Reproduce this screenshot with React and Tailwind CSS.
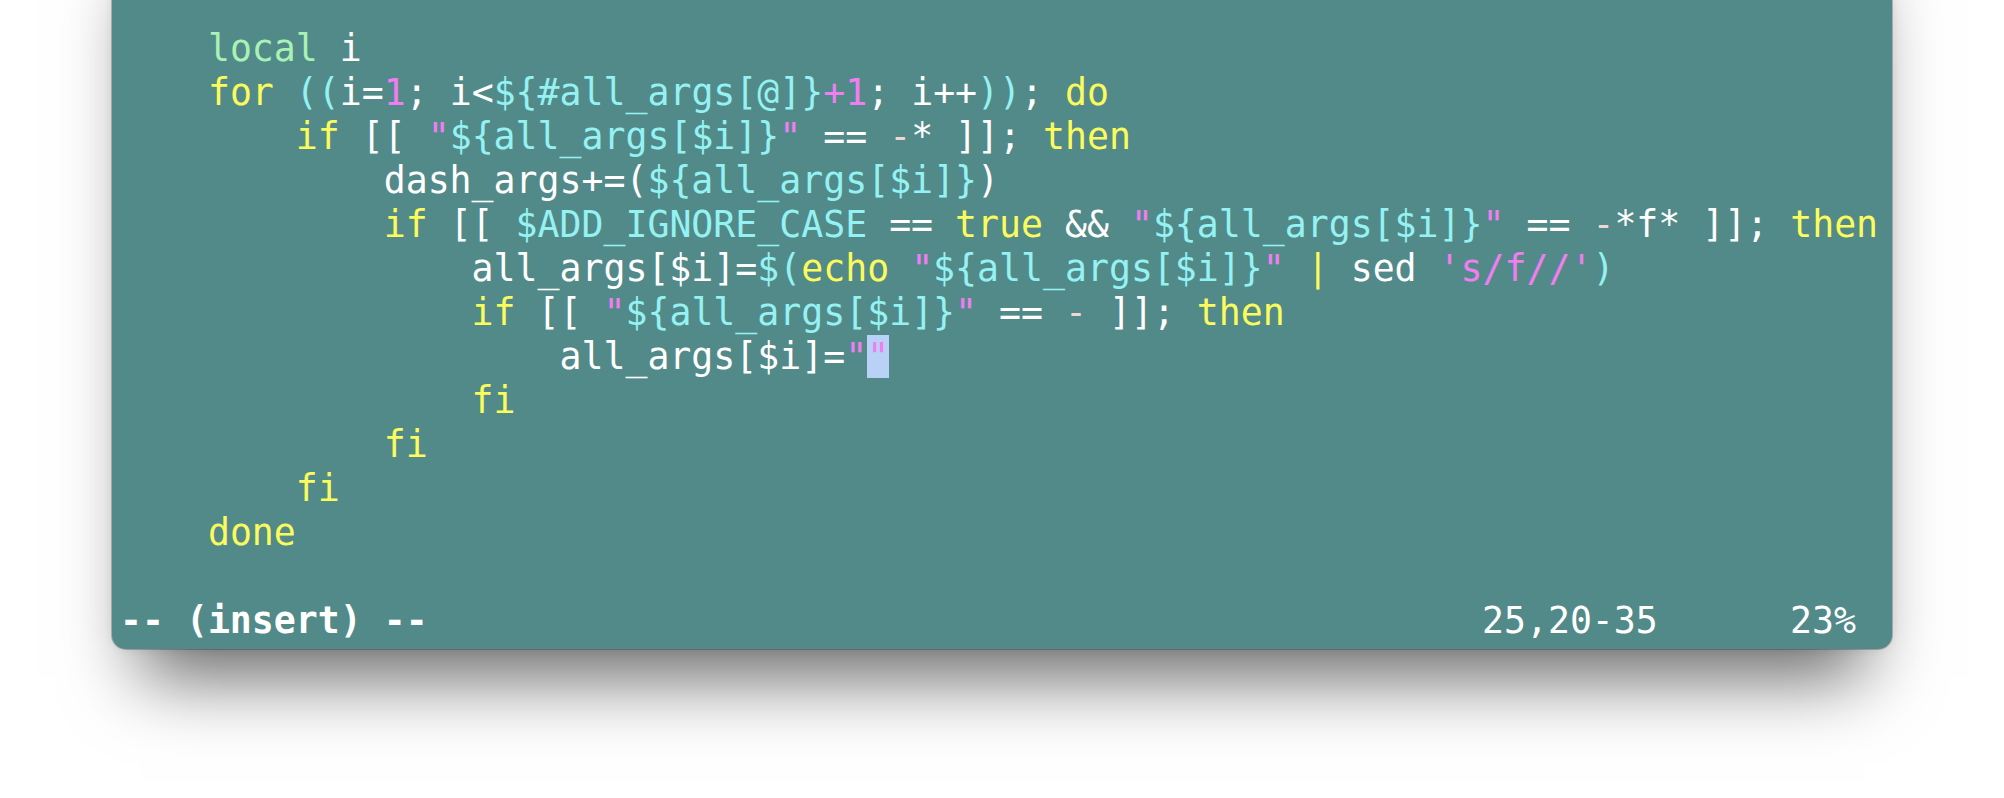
import React from "react";

const C = {
  w: "text-[#ffffff]",
  y: "text-[#fbfb5c]",
  c: "text-[#95f2f2]",
  m: "text-[#f07ef0]",
  g: "text-[#a9f2b4]",
  p: "text-[#ecd6d6]",
};

const q = [['"', "m"], ["${all_args[$i]}", "c"], ['"', "m"]];

const lines = [
  [["    ", "w"], ["local", "g"], [" i", "w"]],
  [
    ["    ", "w"], ["for", "y"], [" ", "w"], ["((", "c"], ["i=", "w"], ["1", "m"],
    ["; i<", "w"], ["${#all_args[@]}", "c"], ["+1", "m"], ["; i++", "w"], ["))", "c"],
    [";", "w"], [" do", "y"],
  ],
  [
    ["        ", "w"], ["if", "y"], [" [[ ", "w"], ...q, [" == ", "w"], ["-", "p"],
    ["* ]];", "w"], [" then", "y"],
  ],
  [["            dash_args+=(", "w"], ["${all_args[$i]}", "c"], [")", "w"]],
  [
    ["            ", "w"], ["if", "y"], [" [[ ", "w"], ["$ADD_IGNORE_CASE", "c"], [" == ", "w"],
    ["true", "y"], [" && ", "w"], ...q, [" == ", "w"], ["-", "p"], ["*f* ]];", "w"],
    [" then", "y"],
  ],
  [
    ["                all_args[$i]=", "w"], ["$(", "c"], ["echo", "y"], [" ", "w"], ...q,
    [" ", "w"], ["|", "y"], [" sed ", "w"], ["'s/f//'", "m"], [")", "c"],
  ],
  [
    ["                ", "w"], ["if", "y"], [" [[ ", "w"], ...q, [" == ", "w"], ["-", "p"],
    [" ]];", "w"], [" then", "y"],
  ],
  [["                    all_args[$i]=", "w"], ['"', "m"], ['"', "cursor"]],
  [["                ", "w"], ["fi", "y"]],
  [["            ", "w"], ["fi", "y"]],
  [["        ", "w"], ["fi", "y"]],
  [["    ", "w"], ["done", "y"]],
  [[" ", "w"]],
];

export default function App() {
  return (
    <div className="w-[2004px] h-[798px] bg-white overflow-hidden pl-[112px]">
      <div
        className="-mt-[100px] w-[1780px] bg-[#528a8a] rounded-b-[14px] pt-[127px] pb-[6px] pl-[8px] shadow-[0_0_10px_rgba(0,0,0,0.07),0_56px_70px_-28px_rgba(0,0,0,0.6),0_0_0_1px_rgba(0,0,0,0.22)]"
        style={{ fontFamily: '"DejaVu Sans Mono", monospace' }}
      >
        <div className="text-[36.5px] leading-[44px] whitespace-pre">
          {lines.map((segs, i) => (
            <div key={i} className="h-[44px]">
              {segs.map(([t, k], j) =>
                k === "cursor" ? (
                  <span key={j} className="bg-[#b9d1f7] text-[#f07ef0]">
                    {t}
                  </span>
                ) : (
                  <span key={j} className={C[k]}>
                    {t}
                  </span>
                )
              )}
            </div>
          ))}
          <div className="h-[44px] flex text-white">
            <span className="font-bold w-[1362px]">-- (insert) --</span>
            <span className="w-[308px]">25,20-35</span>
            <span>23%</span>
          </div>
        </div>
      </div>
    </div>
  );
}
